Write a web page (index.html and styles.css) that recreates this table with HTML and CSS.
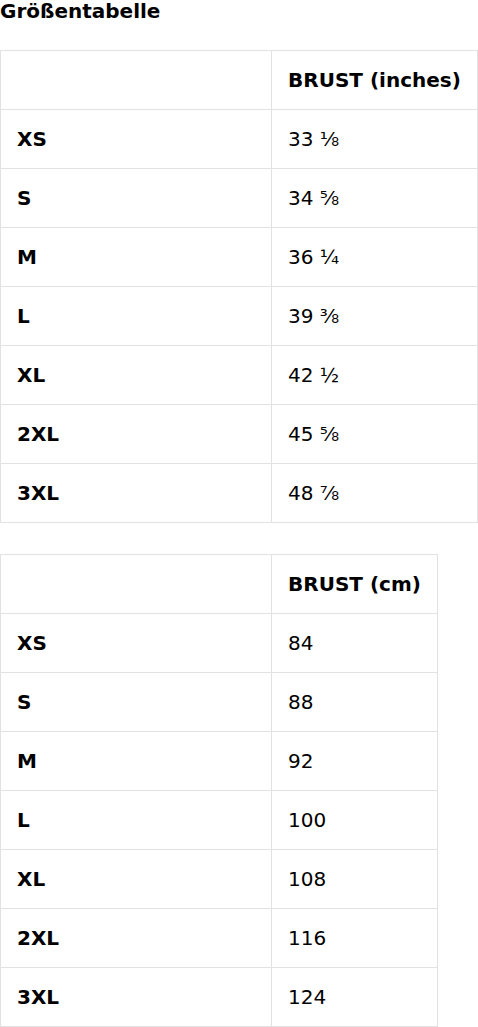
FILE: index.html
```html
<!DOCTYPE html>
<html lang="de">
<head>
<meta charset="utf-8">
<title>Größentabelle</title>
<link rel="stylesheet" href="styles.css">
</head>
<body>
<h2 class="title">Größentabelle</h2>
<table class="size-table">
  <tr><th class="label"></th><th class="value">BRUST (inches)</th></tr>
  <tr><th class="label">XS</th><td class="value">33 ⅛</td></tr>
  <tr><th class="label">S</th><td class="value">34 ⅝</td></tr>
  <tr><th class="label">M</th><td class="value">36 ¼</td></tr>
  <tr><th class="label">L</th><td class="value">39 ⅜</td></tr>
  <tr><th class="label">XL</th><td class="value">42 ½</td></tr>
  <tr><th class="label">2XL</th><td class="value">45 ⅝</td></tr>
  <tr><th class="label">3XL</th><td class="value">48 ⅞</td></tr>
</table>
<table class="size-table second">
  <tr><th class="label"></th><th class="value">BRUST (cm)</th></tr>
  <tr><th class="label">XS</th><td class="value">84</td></tr>
  <tr><th class="label">S</th><td class="value">88</td></tr>
  <tr><th class="label">M</th><td class="value">92</td></tr>
  <tr><th class="label">L</th><td class="value">100</td></tr>
  <tr><th class="label">XL</th><td class="value">108</td></tr>
  <tr><th class="label">2XL</th><td class="value">116</td></tr>
  <tr><th class="label">3XL</th><td class="value">124</td></tr>
</table>
</body>
</html>
```
FILE: styles.css
```css
html, body {
  margin: 0;
  padding: 0;
  background: #fff;
  color: #000;
  font-family: "DejaVu Sans", Verdana, sans-serif;
  font-size: 20px;
}
.title {
  margin: 0 0 27px 0;
  font-size: 20px;
  line-height: 23px;
  font-weight: bold;
}
.size-table {
  border-collapse: collapse;
  margin: 0;
}
.size-table.second {
  margin-top: 31px;
}
.size-table th,
.size-table td {
  border: 1px solid #e2e2e2;
  padding: 17px 17px 17px 16px;
  line-height: 24px;
  text-align: left;
  white-space: nowrap;
}
.size-table th {
  font-weight: bold;
}
.size-table td {
  font-weight: normal;
}
.size-table .label {
  width: 237px;
}
.size-table .value {
  padding-right: 16px;
}
```
